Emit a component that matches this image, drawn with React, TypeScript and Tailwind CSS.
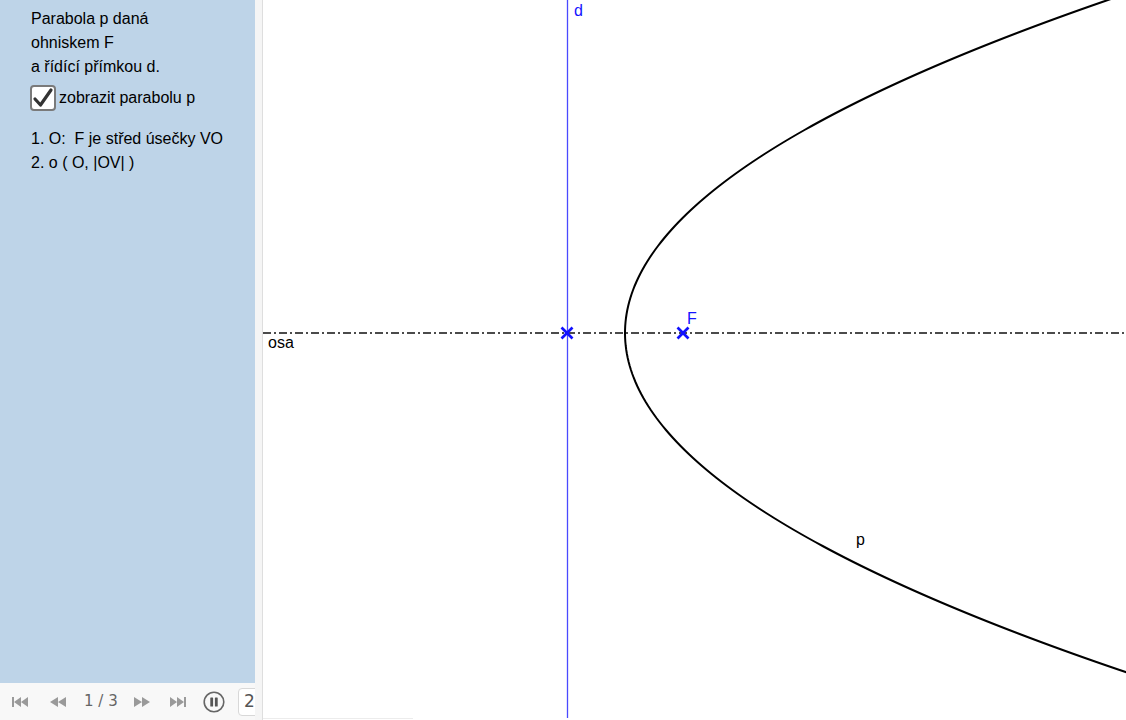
import React from "react"

const FONT = { fontFamily: '"Liberation Sans", Arial, sans-serif' }

function Checkbox() {
  return (
    <div className="w-[26px] h-[26px] shrink-0 rounded-[4px] border-2 border-[#7a7a7a] bg-white flex items-center justify-center">
      <svg width="22" height="22" viewBox="0 0 22 22">
        <path d="M3 12 L8.5 18 L19 3" fill="none" stroke="#333" strokeWidth="3.2" strokeLinecap="round" strokeLinejoin="round" />
      </svg>
    </div>
  )
}

function Controls() {
  const c = "#9a9a9a"
  return (
    <div className="h-[37px] bg-[#f8f8f8] flex items-center overflow-hidden whitespace-nowrap">
      <div className="ml-[12px] w-[17px] shrink-0 flex">
        <svg width="17" height="10" viewBox="0 0 17 10">
          <rect x="0" y="0" width="2" height="10" fill={c} />
          <path d="M2 5 L9 0 V10 Z M9 5 L16 0 V10 Z" fill={c} />
        </svg>
      </div>
      <div className="ml-[21px] w-[17px] shrink-0 flex">
        <svg width="17" height="10" viewBox="0 0 17 10">
          <path d="M0 5 L8 0 V10 Z M8 5 L16 0 V10 Z" fill={c} />
        </svg>
      </div>
      <div className="ml-[17px] w-[32px] shrink-0 text-[15px] text-[#666]" style={{ fontFamily: '"DejaVu Sans", sans-serif' }}>
        1 / 3
      </div>
      <div className="ml-[18px] w-[17px] shrink-0 flex">
        <svg width="17" height="10" viewBox="0 0 17 10">
          <path d="M0 0 L8 5 L0 10 Z M8 0 L16 5 L8 10 Z" fill={c} />
        </svg>
      </div>
      <div className="ml-[19px] w-[17px] shrink-0 flex">
        <svg width="17" height="10" viewBox="0 0 17 10">
          <path d="M0 0 L7 5 L0 10 Z M7 0 L14 5 L7 10 Z" fill={c} />
          <rect x="14" y="0" width="2" height="10" fill={c} />
        </svg>
      </div>
      <div className="ml-[16px] shrink-0 flex">
        <svg width="22" height="22" viewBox="0 0 22 22">
          <circle cx="11" cy="11" r="9.8" fill="none" stroke="#666" strokeWidth="1.6" />
          <rect x="7.3" y="6.5" width="2.8" height="9" rx="0.6" fill="#555" />
          <rect x="11.9" y="6.5" width="2.8" height="9" rx="0.6" fill="#555" />
        </svg>
      </div>
      <div className="ml-[13px] h-[28px] w-[30px] shrink-0 rounded-[4px] border border-[#d8d8d8] bg-white pl-[5px] flex items-center text-[17px] text-[#555]" style={{ fontFamily: '"DejaVu Sans", sans-serif' }}>
        2
      </div>
    </div>
  )
}

function Canvas() {
  const off = 263
  const vx = 625
  const cy = 333
  const k = 229.6
  const pts: string[] = []
  for (let y = -10; y <= 730; y += 4) {
    const dy = y - cy
    const x = vx + (dy * dy) / k - off
    pts.push(`${x.toFixed(2)},${y}`)
  }
  const cross = (x: number, y: number) => (
    <g stroke="#1010ff" strokeWidth="2.6">
      <line x1={x - 5.5 - off} y1={y - 5.5} x2={x + 5.5 - off} y2={y + 5.5} />
      <line x1={x - 5.5 - off} y1={y + 5.5} x2={x + 5.5 - off} y2={y - 5.5} />
    </g>
  )
  return (
    <div className="flex-1 bg-white overflow-hidden">
      <svg width="863" height="720" viewBox="0 0 863 720" className="block">
        <line x1={567.5 - off} y1="0" x2={567.5 - off} y2="718" stroke="#4a4aff" strokeWidth="1.3" />
        <line x1="0" y1="333" x2="863" y2="333" stroke="#111" strokeWidth="1.4" strokeDasharray="8 3 2 3" />
        <polyline points={pts.join(" ")} fill="none" stroke="#000" strokeWidth="2" />
        {cross(567, 333)}
        {cross(683, 333)}
        <text x={574 - off} y="16" fill="#1414ff" fontSize="16" style={FONT}>d</text>
        <text x={687 - off} y="324" fill="#1414ff" fontSize="16" style={FONT}>F</text>
        <text x={268 - off} y="348" fill="#000" fontSize="16" style={FONT}>osa</text>
        <text x={856 - off} y="545" fill="#000" fontSize="16" style={FONT}>p</text>
        <line x1="0" y1="718.5" x2="150" y2="718.5" stroke="#ececec" strokeWidth="1" />
      </svg>
    </div>
  )
}

export default function App() {
  return (
    <div className="w-[1126px] h-[720px] flex overflow-hidden bg-white" style={FONT}>
      <div className="w-[255px] shrink-0 flex flex-col">
        <div className="flex-1 bg-[#bed4e8] pl-[31px] pt-[7px] text-[16px] text-black">
          <div className="leading-[24px]">Parabola p daná</div>
          <div className="leading-[24px]">ohniskem F</div>
          <div className="leading-[24px]">a řídící přímkou d.</div>
          <div className="flex items-center mt-[6px] -ml-[1px] gap-[3px]">
            <Checkbox />
            <span>zobrazit parabolu p</span>
          </div>
          <div className="mt-[16px] leading-[24px]">1. O:&nbsp; F je střed úsečky VO</div>
          <div className="leading-[24px]">2. o ( O, |OV| )</div>
        </div>
        <Controls />
      </div>
      <div className="w-[8px] shrink-0 bg-[#f5f5f5] border-r border-[#dedede]" />
      <Canvas />
    </div>
  )
}
